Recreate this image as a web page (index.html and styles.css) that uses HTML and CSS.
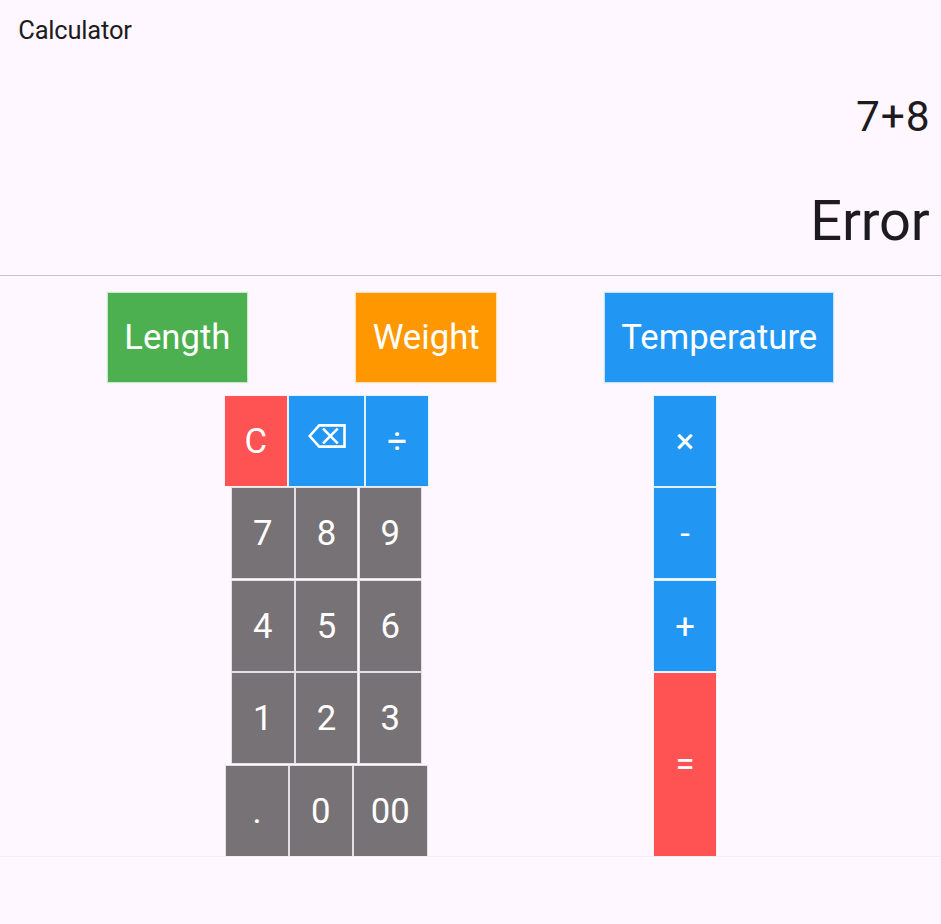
FILE: index.html
```html
<!DOCTYPE html>
<html lang="en">
<head>
<meta charset="utf-8">
<title>Calculator</title>
<link rel="stylesheet" href="styles.css">
</head>
<body>
<header class="title"><span>Calculator</span></header>
<section class="expression"><span>7+8</span></section>
<section class="result"><span>Error</span></section>
<nav class="converters">
  <button class="key length">Length</button>
  <button class="key weight">Weight</button>
  <button class="key temperature">Temperature</button>
</nav>
<main class="pads">
  <div class="numbers">
    <div class="row top"><button class="key red">C</button><button class="key blue erase" aria-label="Delete"><svg width="38" height="24" viewBox="0 0 38 24" fill="none" stroke="#fff" stroke-width="2.6"><path d="M11.2 1.4H36.5V22.6H11.2L1.7 12Z"/><path d="M15 4.7L29.7 19.3M29.7 4.7L15 19.3"/></svg></button><button class="key blue">÷</button></div>
    <div class="row"><button class="key">7</button><button class="key">8</button><button class="key">9</button></div>
    <div class="row"><button class="key">4</button><button class="key">5</button><button class="key">6</button></div>
    <div class="row"><button class="key">1</button><button class="key">2</button><button class="key">3</button></div>
    <div class="row bottom"><button class="key">.</button><button class="key">0</button><button class="key double">00</button></div>
  </div>
  <div class="operators">
    <button class="key blue">×</button>
    <button class="key blue">-</button>
    <button class="key blue">+</button>
    <button class="key red">=</button>
  </div>
</main>
<footer class="footer"></footer>
</body>
</html>
```
FILE: styles.css
```css
* { box-sizing: border-box; }
body {
  margin: 0;
  width: 941px;
  height: 924px;
  overflow: hidden;
  background: #fef7ff;
  color: #1d1b20;
  font-family: Roboto, sans-serif;
  display: flex;
  flex-direction: column;
}
.title {
  height: 60px;
  padding-left: 18.3px;
  font-size: 25.5px;
  letter-spacing: -0.2px;
  line-height: 60px;
}
.expression, .result {
  display: flex;
  justify-content: flex-end;
  padding-right: 11px;
}
.expression { height: 104px; font-size: 42.5px; line-height: 113px; letter-spacing: 0.9px; padding-right: 10.5px; }
.result {
  height: 112px;
  font-size: 56px;
  letter-spacing: -0.2px;
  line-height: 114px;
  padding-right: 11.5px;
  border-bottom: 1px solid #cac4d0;
}
.converters {
  display: flex;
  height: 120px;
  padding: 16.6px 0 0 107.6px;
}
.key {
  width: 61.6px;
  height: 90px;
  padding: 0;
  border: 0;
  border-radius: 0;
  background: #777275;
  box-shadow: 0 0 0 1px #e3dfe4;
  color: #fff;
  font: 400 34.7px/90px Roboto, sans-serif;
  text-align: center;
}
.converters .key { height: 89.6px; line-height: 88px; }
.length { width: 139.5px; background: #4caf50; box-shadow: 0 0 0 1.2px #cbe8cf; }
.weight { width: 140.1px; margin-left: 109px; background: #ff9800; box-shadow: 0 0 0 1.2px #ffe1b9; }
.temperature { width: 228.2px; margin-left: 109px; background: #2196f3; box-shadow: 0 0 0 1.2px #c5e2fc; }
.converters .key { display: flex; align-items: flex-start; justify-content: center; }
.red { background: #ff5252; box-shadow: 0 0 0 1px #fff0f6; }
.blue { background: #2196f3; box-shadow: 0 0 0 1px #e1f0fe; }
.pads { display: flex; height: 460px; }
.numbers, .operators {
  display: flex;
  flex-direction: column;
  gap: 2.4px;
}
.numbers { width: 430px; padding-left: 232px; }
.row { display: flex; gap: 2.2px; }
.top { margin-left: -7px; }
.bottom { margin-left: -5.8px; }
.erase {
  width: 75.5px;
  display: flex;
  justify-content: center;
  padding: 28px 0 0 0.6px;
}
.erase svg { display: block; }
.double { width: 73px; }
.operators { margin-left: 224.2px; }
.operators .red { height: 182.6px; line-height: 182px; }
.footer { flex: 1; border-top: 1px solid #f4eef5; }
```
